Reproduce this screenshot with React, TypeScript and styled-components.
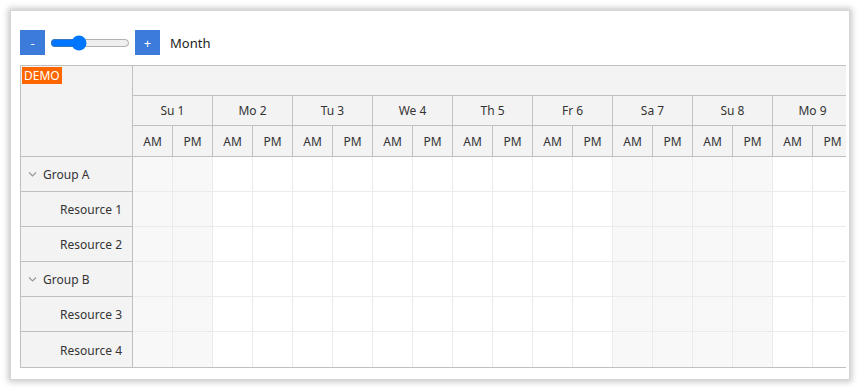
import React from 'react';
import styled, { createGlobalStyle } from 'styled-components';

const GlobalStyle = createGlobalStyle`
  html, body {
    margin: 0;
    padding: 0;
    background: #ffffff;
  }
  body {
    font-family: "Noto Sans", "Open Sans", Arial, sans-serif;
    font-size: 12px;
    color: #333;
  }
`;

const Card = styled.div`
  margin: 10px;
  width: 840px;
  box-sizing: border-box;
  padding: 19px 5px 11px 9px;
  background: #fff;
  border: 1px solid #d6d6d6;
  box-shadow: 0 0 6px 2px rgba(0, 0, 0, 0.22);
`;

const Toolbar = styled.div`
  display: flex;
  align-items: center;
  height: 25px;
  margin-bottom: 10px;
`;

const ZoomButton = styled.button`
  width: 25px;
  height: 25px;
  padding: 0;
  border: none;
  background: #3d7bdb;
  color: #fff;
  font-family: inherit;
  font-size: 13px;
  cursor: pointer;
`;

const Slider = styled.input`
  width: 80px;
  margin: 0 5px 0 5px;
`;

const Label = styled.span`
  margin-left: 10px;
  font-size: 13px;
  color: #222;
`;

const Scheduler = styled.div`
  display: flex;
  width: 825px;
  overflow: hidden;
  border-top: 1px solid #c0c0c0;
  border-left: 1px solid #c0c0c0;
  border-bottom: 1px solid #c0c0c0;
`;

const RowHeaders = styled.div`
  flex: 0 0 111px;
  border-right: 1px solid #c0c0c0;
  background: #f3f3f3;
`;

const Corner = styled.div`
  position: relative;
  height: 91px;
  box-sizing: border-box;
  border-bottom: 1px solid #c0c0c0;
`;

const Demo = styled.span`
  position: absolute;
  top: 1px;
  left: 1px;
  padding: 0 2px;
  height: 17px;
  line-height: 17px;
  background: #ff6600;
  color: #fff;
  font-size: 12px;
`;

const RowHeader = styled.div<{ $group?: boolean }>`
  height: 35px;
  box-sizing: border-box;
  border-bottom: 1px solid #c0c0c0;
  display: flex;
  align-items: center;
  justify-content: ${(p) => (p.$group ? 'flex-start' : 'flex-end')};
  padding: ${(p) => (p.$group ? '1px 0 0 7px' : '1px 10px 0 0')};
  &:last-child {
    border-bottom: none;
  }
`;

const Chevron = styled.svg`
  width: 9px;
  height: 9px;
  margin-right: 6px;
`;

const Timeline = styled.div`
  flex: 1;
  overflow: hidden;
`;

const HeaderRow = styled.div<{ $h?: number }>`
  display: flex;
  height: ${(p) => p.$h ?? 30}px;
  box-sizing: border-box;
  border-bottom: 1px solid #c0c0c0;
  background: #f3f3f3;
  width: max-content;
  min-width: 100%;
`;

const HeaderCell = styled.div<{ $w: number }>`
  flex: 0 0 ${(p) => p.$w}px;
  box-sizing: border-box;
  border-right: 1px solid #c0c0c0;
  display: flex;
  align-items: center;
  justify-content: center;
`;

const GridRow = styled.div`
  display: flex;
  height: 35px;
  box-sizing: border-box;
  border-bottom: 1px solid #ebebeb;
  width: max-content;
  &:last-child {
    border-bottom: none;
  }
`;

const Cell = styled.div<{ $weekend?: boolean }>`
  flex: 0 0 40px;
  box-sizing: border-box;
  border-right: 1px solid #ebebeb;
  background: ${(p) => (p.$weekend ? '#f8f8f8' : '#fff')};
`;

const days = ['Su 1', 'Mo 2', 'Tu 3', 'We 4', 'Th 5', 'Fr 6', 'Sa 7', 'Su 8', 'Mo 9'];
const weekend = (d: string) => d.startsWith('Su') || d.startsWith('Sa');

const rows = [
  { name: 'Group A', group: true },
  { name: 'Resource 1' },
  { name: 'Resource 2' },
  { name: 'Group B', group: true },
  { name: 'Resource 3' },
  { name: 'Resource 4' },
];

const App: React.FC = () => {
  return (
    <>
      <GlobalStyle />
      <Card>
        <Toolbar>
          <ZoomButton>-</ZoomButton>
          <Slider type="range" min={0} max={100} defaultValue={33} />
          <ZoomButton>+</ZoomButton>
          <Label>Month</Label>
        </Toolbar>
        <Scheduler>
          <RowHeaders>
            <Corner>
              <Demo>DEMO</Demo>
            </Corner>
            {rows.map((r) => (
              <RowHeader key={r.name} $group={r.group}>
                {r.group && (
                  <Chevron viewBox="0 0 9 9">
                    <path d="M1 2.5 L4.5 6 L8 2.5" fill="none" stroke="#999" strokeWidth="1.2" />
                  </Chevron>
                )}
                {r.name}
              </RowHeader>
            ))}
          </RowHeaders>
          <Timeline>
            <HeaderRow />
            <HeaderRow>
              {days.map((d) => (
                <HeaderCell key={d} $w={80}>
                  {d}
                </HeaderCell>
              ))}
            </HeaderRow>
            <HeaderRow $h={31}>
              {days.map((d) => (
                <React.Fragment key={d}>
                  <HeaderCell $w={40}>AM</HeaderCell>
                  <HeaderCell $w={40}>PM</HeaderCell>
                </React.Fragment>
              ))}
            </HeaderRow>
            {rows.map((r) => (
              <GridRow key={r.name}>
                {days.map((d) => (
                  <React.Fragment key={d}>
                    <Cell $weekend={weekend(d)} />
                    <Cell $weekend={weekend(d)} />
                  </React.Fragment>
                ))}
              </GridRow>
            ))}
          </Timeline>
        </Scheduler>
      </Card>
    </>
  );
};

export default App;
